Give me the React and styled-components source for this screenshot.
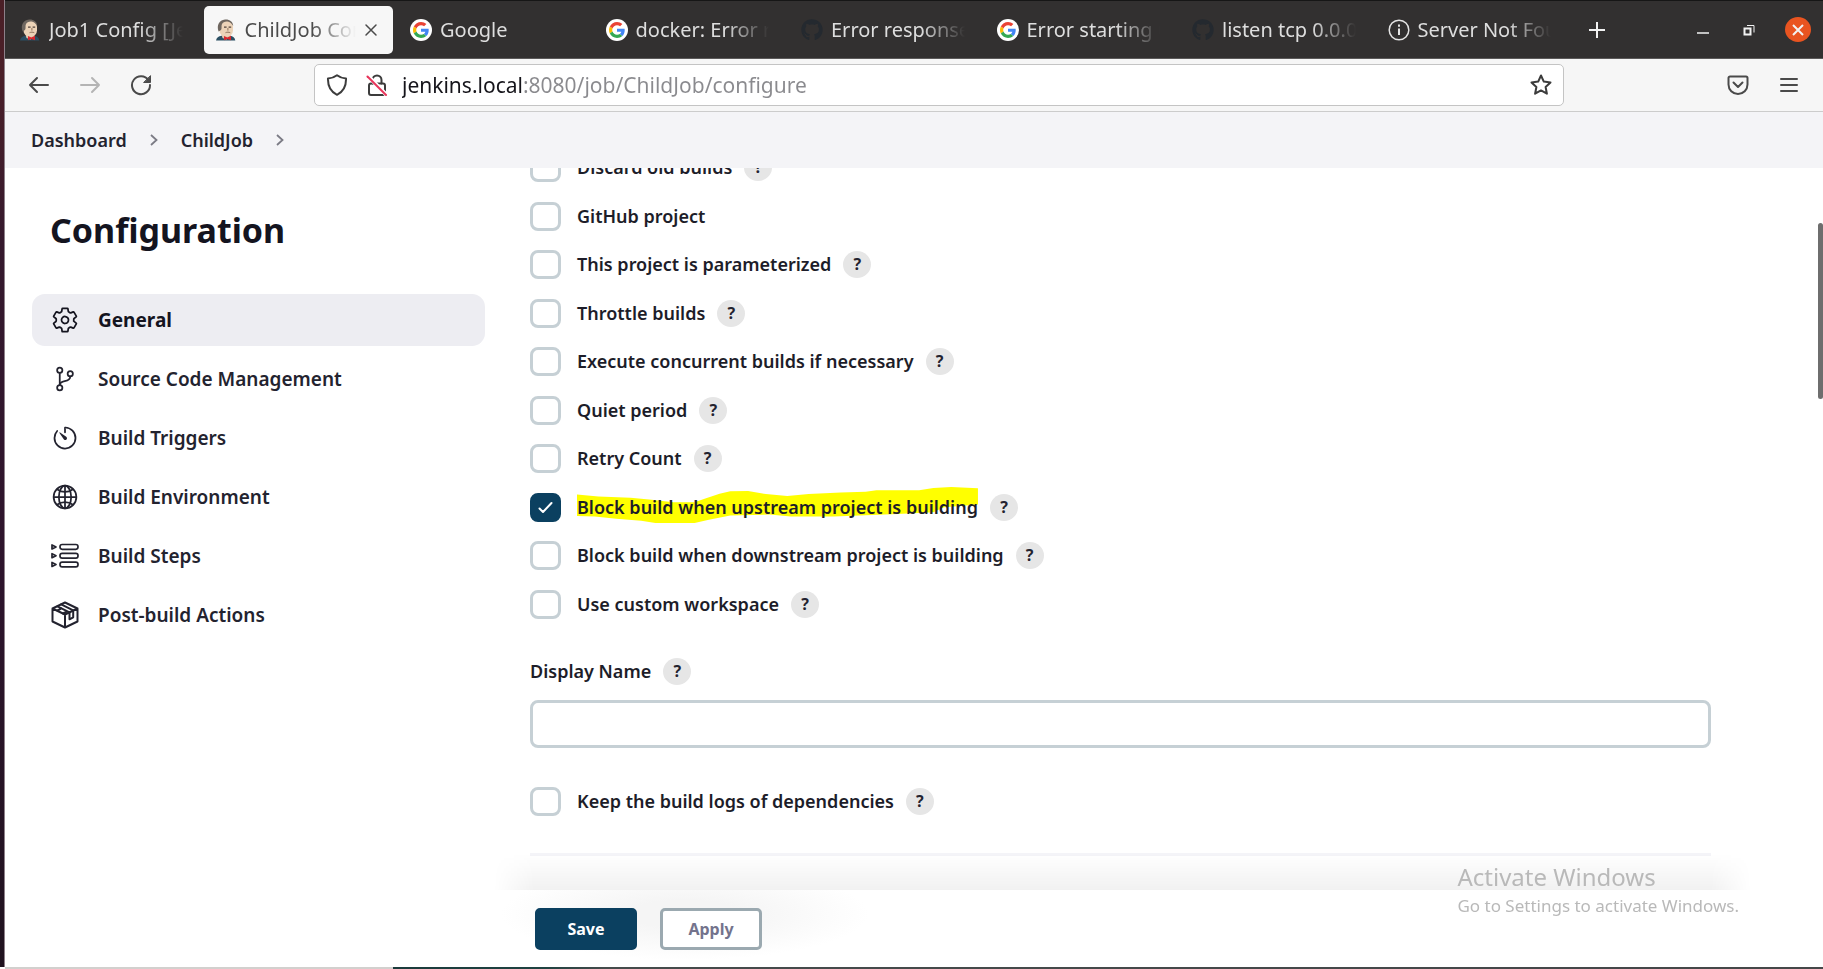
import React from "react";
import styled, { createGlobalStyle, css } from "styled-components";
import {
  IoSettingsOutline,
  IoGitBranchOutline,
  IoTimerOutline,
  IoGlobeOutline,
} from "react-icons/io5";
import { FaGithub } from "react-icons/fa";

const GlobalStyle = createGlobalStyle`
  * { box-sizing: border-box; }
  body {
    margin: 0;
    background: #ffffff;
    color: #14141f;
    font-family: "Noto Sans", "Open Sans", sans-serif;
  }
  button, input { font-family: inherit; }
`;

/* ---------- Shell ---------- */

const Desktop = styled.div`
  display: flex;
  height: 100vh;
  min-height: 640px;
  overflow: hidden;
`;

const DockEdge = styled.div`
  flex: none;
  width: 5px;
  margin-bottom: 2px;
  background: linear-gradient(#4a1f26 0%, #4a1f28 8%, #35192d 25%, #2d142c 60%, #20131f 100%);
  border-right: 1px solid #8d8089;
`;

const BrowserWindow = styled.div`
  flex: 1;
  min-width: 0;
  display: flex;
  flex-direction: column;
`;

/* ---------- Title bar ---------- */

const TitleBar = styled.header`
  flex: none;
  display: flex;
  height: 59px;
  background: #323030;
  border-top: 1px solid #161616;
  border-bottom: 1px solid #5c5a5a;
`;

const TabStrip = styled.div`
  flex: 1;
  min-width: 0;
  display: flex;
`;

const Tab = styled.div`
  flex: 1;
  min-width: 0;
  display: flex;
  align-items: center;
  gap: 8px;
  height: 48px;
  margin: 5px 3px 0;
  padding: 0 15px 0 11px;
  border-radius: 5px;
  color: #dedede;
  font-size: 20px;
  line-height: 30px;
  white-space: nowrap;
  ${(p) =>
    p.$active &&
    css`
      background: #f7f7f7;
      color: #4b4b4b;
    `}
`;

const TabIcon = styled.span`
  flex: none;
  display: flex;
  width: 22px;
  height: 22px;
  svg { width: 22px; height: 22px; }
`;

const TabTitle = styled.span`
  flex: 1;
  min-width: 0;
  overflow: hidden;
  mask-image: linear-gradient(to left, transparent 0, black 44px);
`;

const TabClose = styled.button`
  flex: none;
  display: flex;
  padding: 0;
  border: 0;
  background: none;
  color: #4b4b4b;
  svg { width: 14px; height: 14px; }
`;

const WindowControls = styled.div`
  flex: none;
  display: flex;
  align-items: center;
  justify-content: space-between;
  width: 254px;
  padding: 0 12px 0 18px;
`;

const ControlGroup = styled.div`
  display: flex;
  align-items: center;
  gap: 26px;
`;

const ControlButton = styled.button`
  display: flex;
  align-items: center;
  justify-content: center;
  width: 20px;
  height: 28px;
  padding: 0;
  border: 0;
  background: none;
  color: #f2f2f2;
  ${(p) =>
    p.$close &&
    css`
      width: 26px;
      height: 25px;
      border-radius: 50%;
      background: #e95420;
    `}
`;

/* ---------- Toolbar ---------- */

const Toolbar = styled.div`
  flex: none;
  display: flex;
  align-items: center;
  height: 53px;
  padding: 0 23px;
  background: #f6f6f6;
  border-bottom: 1px solid #cccccc;
`;

const ToolGroup = styled.div`
  flex: none;
  display: flex;
  align-items: center;
  gap: 29px;
`;

const ToolButton = styled.button`
  display: flex;
  padding: 0;
  border: 0;
  background: none;
  color: ${(p) => (p.$dim ? "#b4b4b4" : "#4a4a4a")};
  svg { width: 22px; height: 22px; }
`;

const AddressBar = styled.div`
  flex: 1;
  min-width: 0;
  display: flex;
  align-items: center;
  gap: 18px;
  height: 42px;
  margin: 0 163px 0 162px;
  padding: 0 11px;
  background: #ffffff;
  border: 1px solid #c4c4c4;
  border-radius: 5px;
  color: #3c3c3c;
  svg { flex: none; width: 22px; height: 22px; }
`;

const AddressInput = styled.input`
  flex: 1;
  min-width: 0;
  height: 36px;
  margin-left: -4px;
  padding: 0;
  border: 0;
  outline: 0;
  font-size: 21px;
  color: transparent;
  background: linear-gradient(to right, #15141a 122px, #8a8a8e 122px);
  background-clip: text;
`;

/* ---------- Breadcrumbs ---------- */

const Breadcrumbs = styled.nav`
  flex: none;
  display: flex;
  align-items: center;
  gap: 22px;
  height: 56px;
  padding-left: 26px;
  background: #f4f4f7;
  color: #7b7b85;
  svg { width: 10px; height: 12px; }
`;

const Crumb = styled.a`
  color: #23232f;
  font-size: 18px;
  font-weight: 600;
  line-height: 24px;
  text-decoration: none;
`;

/* ---------- Page ---------- */

const Page = styled.main`
  position: relative;
  flex: 1;
  min-height: 0;
  overflow: hidden;
  display: grid;
  grid-template-columns: 453px 1fr;
  column-gap: 45px;
  padding: 0 112px 0 27px;
`;

const SideNav = styled.aside`
  padding-top: 42px;
`;

const Heading = styled.h1`
  margin: 0 0 44px 18px;
  font-size: 34px;
  font-weight: 700;
  line-height: 40px;
`;

const NavList = styled.nav`
  display: flex;
  flex-direction: column;
  gap: 7px;
`;

const NavItem = styled.a`
  display: flex;
  align-items: center;
  gap: 19px;
  height: 52px;
  padding: 0 19px;
  border-radius: 13px;
  background: ${(p) => (p.$active ? "#ededf2" : "transparent")};
  color: ${(p) => (p.$active ? "#14141f" : "#23232f")};
  font-size: 19px;
  font-weight: ${(p) => (p.$active ? 700 : 600)};
  line-height: 28px;
  text-decoration: none;
  svg { width: 28px; height: 28px; }
`;

const SettingsForm = styled.form`
  min-width: 0;
`;

const OptionList = styled.div`
  display: flex;
  flex-direction: column;
  justify-content: space-between;
  height: 466px;
  margin-top: -15px;
`;

const OptionRow = styled.div`
  display: flex;
  align-items: center;
  height: 29px;
  margin-top: ${(p) => (p.$spaced ? "39px" : "0")};
`;

const CheckWrap = styled.span`
  position: relative;
  flex: none;
  display: flex;
  margin-right: 16px;
  svg {
    position: absolute;
    inset: 8px;
    width: 15px;
    height: 13px;
    pointer-events: none;
  }
`;

const Checkbox = styled.input`
  appearance: none;
  width: 31px;
  height: 29px;
  margin: 0;
  border: 3px solid #c6d0d5;
  border-radius: 8px;
  background: #ffffff;
  &:checked {
    border-color: #0b4060;
    background: #0b4060;
  }
`;

const OptionLabel = styled.label`
  position: relative;
  z-index: 0;
  margin-right: 12px;
  color: #1d1d29;
  font-size: 18px;
  font-weight: 600;
  line-height: 29px;
  white-space: nowrap;
`;

const MarkerStroke = styled.svg`
  position: absolute;
  z-index: -1;
  left: 0;
  top: -6px;
  width: 100%;
  height: 36px;
`;

const HelpButton = styled.button`
  flex: none;
  width: 28px;
  height: 27px;
  padding: 0;
  border: 0;
  border-radius: 50%;
  background: #e6e6e6;
  color: #23232f;
  font-size: 16px;
  font-weight: 700;
  line-height: 27px;
`;

const FieldHeader = styled.div`
  display: flex;
  align-items: center;
  height: 28px;
  margin: 38px 0 15px;
`;

const TextField = styled.input`
  display: block;
  width: 100%;
  height: 48px;
  padding: 0 12px;
  border: 3px solid #c6d0d5;
  border-radius: 8px;
  background: #ffffff;
  font-size: 18px;
`;

const SectionDivider = styled.hr`
  height: 3px;
  margin: 37px 0 0;
  border: 0;
  background: #f4f4f8;
`;

const FooterShade = styled.div`
  position: absolute;
  left: 485px;
  right: 68px;
  bottom: 0;
  height: 36px;
  background: linear-gradient(rgba(0, 0, 0, 0), rgba(0, 0, 0, 0.055));
  mask-image: linear-gradient(to right, transparent 4px, black 44px, black calc(100% - 44px), transparent calc(100% - 4px));
`;

const ScrollThumb = styled.div`
  position: absolute;
  top: 55px;
  right: 0;
  width: 5px;
  height: 176px;
  border-radius: 3px;
  background: #6e6e6e;
`;

const ActionBar = styled.footer`
  flex: none;
  display: flex;
  align-items: flex-start;
  gap: 23px;
  height: 77px;
  padding: 18px 0 0 530px;
  background: radial-gradient(ellipse 184px 46px at 680px 24px, #f5f5f5 30%, #ffffff 100%);
`;

const ActionButton = styled.button`
  width: 102px;
  height: 42px;
  padding: 0;
  border: 3px solid ${(p) => (p.$primary ? "#0b4060" : "#9ba9b0")};
  border-radius: 5px;
  background: ${(p) => (p.$primary ? "#0b4060" : "#ffffff")};
  color: ${(p) => (p.$primary ? "#ffffff" : "#73738c")};
  font-size: 16px;
  font-weight: 700;
`;

const Taskbar = styled.div`
  flex: none;
  height: 2px;
  background: linear-gradient(to right, #d2d0ce 388px, #1b3b3c 388px, #1f4241 540px, #454b4b 600px, #454749 100%);
`;

const Watermark = styled.aside`
  position: fixed;
  right: 84px;
  bottom: 50px;
  color: #b9b9b9;
  font-size: 17px;
  line-height: 26px;
  pointer-events: none;
`;

const WatermarkTitle = styled.div`
  font-size: 24px;
  line-height: 32px;
`;

/* ---------- Drawings ---------- */

const JenkinsHead = () => (
  <svg viewBox="0 0 22 22" aria-hidden="true">
    <path d="M1 21.500c.6-3 2.400-4.300 5.500-4.800h8.500c3.200.5 4.700 1.800 5.300 4.800z" fill="#2b4f63" />
    <path d="M6 13.500l1.500 5.500 4 1.500 4-3v-4z" fill="#e3c9ae" />
    <rect x="4.500" y="1.400" width="13.500" height="16" rx="6" fill="#ecd3b8" />
    <path d="M3.600 12.500C1.400 6.500 4 1.200 10 .6c4.500-.3 8 2 8.200 6.400C17 5 15 3 12.500 2.600 9.500 2.400 8 3.400 7 5c-1 2 .2 4.500-1 6z" fill="#6e665f" />
    <path d="M9 8.200h2.600M13.600 8.200h2.600" stroke="#51433a" strokeWidth="1.200" />
    <path d="M12.900 9v2.600M10.500 13.700c1.500-.7 3.300-.7 4.800 0" stroke="#8c705a" strokeWidth="1" fill="none" />
    <path d="M9 17l3.300 1.500L16 16.800v4.400l-3.700-1.300L9 21.200z" fill="#d8292f" />
  </svg>
);

const GoogleLogo = () => (
  <svg viewBox="0 0 48 48" aria-hidden="true">
    <circle cx="24" cy="24" r="24" fill="#ffffff" />
    <g transform="translate(6.500 6.500) scale(.73)">
      <path fill="#EA4335" d="M24 9.500c3.540 0 6.710 1.220 9.210 3.600l6.850-6.850C35.900 2.380 30.470 0 24 0 14.620 0 6.510 5.380 2.560 13.220l7.980 6.190C12.430 13.720 17.740 9.500 24 9.500z" />
      <path fill="#4285F4" d="M46.980 24.550c0-1.570-.15-3.090-.38-4.550H24v9.020h12.940c-.58 2.960-2.260 5.480-4.780 7.180l7.730 6c4.510-4.180 7.090-10.360 7.090-17.650z" />
      <path fill="#FBBC05" d="M10.530 28.590c-.48-1.450-.76-2.990-.76-4.590s.27-3.140.76-4.590l-7.980-6.190C.92 16.460 0 20.120 0 24c0 3.880.92 7.540 2.560 10.780l7.970-6.190z" />
      <path fill="#34A853" d="M24 48c6.480 0 11.930-2.130 15.890-5.810l-7.730-6c-2.150 1.450-4.920 2.300-8.160 2.300-6.260 0-11.570-4.220-13.470-9.910l-7.980 6.190C6.510 42.620 14.620 48 24 48z" />
    </g>
  </svg>
);

const GithubLogo = () => <FaGithub color="#24292f" />;

const InfoIcon = () => (
  <svg viewBox="0 0 22 22" fill="none" stroke="#e4e4e4" strokeWidth="1.500" aria-hidden="true">
    <circle cx="11" cy="11" r="9.800" />
    <path d="M11 9.500V16M11 5.500v2.200" strokeWidth="2" />
  </svg>
);

const Stroke = ({ children, box = 22, width = 2 }) => (
  <svg
    viewBox={`0 0 ${box} ${box}`}
    fill="none"
    stroke="currentColor"
    strokeWidth={width}
    strokeLinecap="round"
    strokeLinejoin="round"
    aria-hidden="true"
  >
    {children}
  </svg>
);

const CloseIcon = () => (
  <Stroke box={14} width={1.5}><path d="M2 2l10 10M12 2L2 12" /></Stroke>
);
const BackIcon = () => (
  <Stroke><path d="M20 11H2M9 4l-7 7 7 7" /></Stroke>
);
const ForwardIcon = () => (
  <Stroke><path d="M2 11h18M13 4l7 7-7 7" /></Stroke>
);
const ReloadIcon = () => (
  <Stroke>
    <path d="M18.500 6.200A9 9 0 1 0 20 11" />
    <path d="M20.500 2v6.500H14z" fill="currentColor" strokeWidth="1" />
  </Stroke>
);
const ShieldIcon = () => (
  <Stroke><path d="M11 1.200c2.500 2 5.500 3 9 3.200.3 7.500-2 13-9 16.400C4 17.400 1.700 11.900 2 4.400c3.500-.2 6.500-1.200 9-3.200z" /></Stroke>
);
const LockIcon = () => (
  <Stroke>
    <path d="M6.500 9.500V6a4.500 4.500 0 0 1 9 0v3.500" />
    <rect x="3" y="9.500" width="16" height="11.500" rx="2" />
    <path d="M2.500 2.500l18 18.500" stroke="#ffffff" strokeWidth="4" />
    <path d="M1.500 2.500l18.500 18.500" stroke="#e8355b" />
  </Stroke>
);
const StarIcon = () => (
  <Stroke><path d="M11 1.500l2.800 6.100 6.700.8-4.900 4.600 1.300 6.700-5.900-3.300-5.900 3.300 1.300-6.700L1.500 8.400l6.700-.8z" /></Stroke>
);
const PocketIcon = () => (
  <Stroke>
    <path d="M3 2.500h16a1.500 1.500 0 0 1 1.500 1.500v6.500a9.500 9.500 0 0 1-19 0V4A1.500 1.500 0 0 1 3 2.500z" />
    <path d="M6.500 8.500l4.500 4.500 4.500-4.500" />
  </Stroke>
);
const MenuIcon = () => (
  <Stroke><path d="M3 5h16M3 11h16M3 17h16" /></Stroke>
);
const Chevron = () => (
  <svg viewBox="0 0 10 12" fill="none" stroke="currentColor" strokeWidth="1.800" aria-hidden="true">
    <path d="M2 1l5.500 5L2 11" />
  </svg>
);
const StepsIcon = () => (
  <Stroke box={28} width={1.7}>
    {[2.5, 11.3, 20.1].map((y) => (
      <React.Fragment key={y}>
        <rect x="9" y={y} width="18" height="4.800" rx="2.200" />
        <path d={`M1 ${y + 0.4}v4l4-2z`} />
      </React.Fragment>
    ))}
  </Stroke>
);
const PackageIcon = () => (
  <Stroke box={28} width={2}>
    <path d="M14 1.500L26.500 7.500v13L14 26.500 1.500 20.500v-13zM1.500 7.500l12.500 6 12.500-6M14 13.500v13" />
    <path d="M6.500 5.300l12 6M10.200 3.400l12 6M18.500 11.300v7l3.700-2V9.400M6.500 9.500l4-2.200M12 12.500l4-2" />
  </Stroke>
);

/* ---------- Data ---------- */

const tabs = [
  { title: "Job1 Config [Jenkins]", Icon: JenkinsHead },
  { title: "ChildJob Config", Icon: JenkinsHead, active: true },
  { title: "Google", Icon: GoogleLogo },
  { title: "docker: Error response", Icon: GoogleLogo },
  { title: "Error response", Icon: GithubLogo },
  { title: "Error starting userland", Icon: GoogleLogo },
  { title: "listen tcp 0.0.0.0", Icon: GithubLogo },
  { title: "Server Not Found", Icon: InfoIcon },
];

const navItems = [
  { label: "General", Icon: IoSettingsOutline, active: true },
  { label: "Source Code Management", Icon: IoGitBranchOutline },
  { label: "Build Triggers", Icon: IoTimerOutline },
  { label: "Build Environment", Icon: IoGlobeOutline },
  { label: "Build Steps", Icon: StepsIcon },
  { label: "Post-build Actions", Icon: PackageIcon },
];

const options = [
  { id: "discard", label: "Discard old builds", help: true },
  { id: "github", label: "GitHub project" },
  { id: "params", label: "This project is parameterized", help: true },
  { id: "throttle", label: "Throttle builds", help: true },
  { id: "concurrent", label: "Execute concurrent builds if necessary", help: true },
  { id: "quiet", label: "Quiet period", help: true },
  { id: "retry", label: "Retry Count", help: true },
  { id: "upstream", label: "Block build when upstream project is building", help: true, checked: true, marked: true },
  { id: "downstream", label: "Block build when downstream project is building", help: true },
  { id: "workspace", label: "Use custom workspace", help: true },
];

const Help = ({ label }) => (
  <HelpButton type="button" aria-label={`Help for feature: ${label}`}>?</HelpButton>
);

const Option = ({ id, label, help, checked, marked, spaced }) => (
  <OptionRow $spaced={spaced}>
    <CheckWrap>
      <Checkbox type="checkbox" id={id} defaultChecked={checked} />
      {checked && (
        <svg viewBox="0 0 15 13" fill="none" stroke="#ffffff" strokeWidth="2" strokeLinecap="round" strokeLinejoin="round" aria-hidden="true">
          <path d="M1.500 7.500L5 11l8.500-9" />
        </svg>
      )}
    </CheckWrap>
    <OptionLabel htmlFor={id}>
      {marked && (
        <MarkerStroke viewBox="0 0 1125 107" preserveAspectRatio="none" aria-hidden="true">
          <path
            fill="#ffff00"
            d="M0 22L60 28 150 32 210 38 270 45H330L360 34 400 20 430 13 480 12 530 21 590 27 650 21 740 16 810 14 840 10H960L1000 3 1050 0 1125 4V52L1030 60 1000 75 900 80 720 88H600L540 82 430 85 370 97 330 107H220L180 100 110 94 50 88 0 86z"
          />
        </MarkerStroke>
      )}
      {label}
    </OptionLabel>
    {help && <Help label={label} />}
  </OptionRow>
);

export default function App() {
  return (
    <>
      <GlobalStyle />
      <Desktop>
        <DockEdge />
        <BrowserWindow>
          <TitleBar>
            <TabStrip>
              {tabs.map(({ title, Icon, active }) => (
                <Tab key={title} $active={active}>
                  <TabIcon><Icon /></TabIcon>
                  <TabTitle>{title}</TabTitle>
                  {active && <TabClose aria-label="Close tab"><CloseIcon /></TabClose>}
                </Tab>
              ))}
            </TabStrip>
            <WindowControls>
              <ControlButton aria-label="New tab">
                <svg width="18" height="18" viewBox="0 0 18 18" stroke="currentColor" strokeWidth="2"><path d="M9 1v16M1 9h16" /></svg>
              </ControlButton>
              <ControlGroup>
                <ControlButton aria-label="Minimize">
                  <svg width="12" height="12" viewBox="0 0 12 12" stroke="currentColor" strokeWidth="1.500"><path d="M0 9h12" /></svg>
                </ControlButton>
                <ControlButton aria-label="Restore">
                  <svg width="12" height="12" viewBox="0 0 12 12" fill="none" stroke="currentColor"><path d="M1.500 4.500h6v6h-6z" strokeWidth="2" /><path d="M4 1.500h7v7" strokeWidth="1" /></svg>
                </ControlButton>
                <ControlButton $close aria-label="Close window">
                  <svg width="12" height="12" viewBox="0 0 12 12" stroke="currentColor" strokeWidth="2"><path d="M1 1l10 10M11 1L1 11" /></svg>
                </ControlButton>
              </ControlGroup>
            </WindowControls>
          </TitleBar>

          <Toolbar>
            <ToolGroup>
              <ToolButton aria-label="Back"><BackIcon /></ToolButton>
              <ToolButton $dim aria-label="Forward"><ForwardIcon /></ToolButton>
              <ToolButton aria-label="Reload"><ReloadIcon /></ToolButton>
            </ToolGroup>
            <AddressBar>
              <ShieldIcon />
              <LockIcon />
              <AddressInput aria-label="Address" defaultValue="jenkins.local:8080/job/ChildJob/configure" />
              <StarIcon />
            </AddressBar>
            <ToolGroup>
              <ToolButton aria-label="Save to Pocket"><PocketIcon /></ToolButton>
              <ToolButton aria-label="Open menu"><MenuIcon /></ToolButton>
            </ToolGroup>
          </Toolbar>

          <Breadcrumbs aria-label="Breadcrumb">
            <Crumb href="#dashboard">Dashboard</Crumb>
            <Chevron />
            <Crumb href="#childjob">ChildJob</Crumb>
            <Chevron />
          </Breadcrumbs>

          <Page>
            <SideNav>
              <Heading>Configuration</Heading>
              <NavList aria-label="Configuration sections">
                {navItems.map(({ label, Icon, active }) => (
                  <NavItem key={label} href="#section" $active={active}>
                    <Icon />
                    {label}
                  </NavItem>
                ))}
              </NavList>
            </SideNav>
            <SettingsForm id="settings">
              <OptionList>
                {options.map((o) => <Option key={o.id} {...o} />)}
              </OptionList>
              <FieldHeader>
                <OptionLabel htmlFor="display-name">Display Name</OptionLabel>
                <Help label="Display Name" />
              </FieldHeader>
              <TextField id="display-name" type="text" />
              <Option id="keep-logs" label="Keep the build logs of dependencies" help spaced />
              <SectionDivider />
            </SettingsForm>
            <FooterShade />
            <ScrollThumb />
          </Page>

          <ActionBar>
            <ActionButton $primary type="submit" form="settings">Save</ActionButton>
            <ActionButton type="button">Apply</ActionButton>
          </ActionBar>
          <Taskbar />
        </BrowserWindow>
      </Desktop>
      <Watermark>
        <WatermarkTitle>Activate Windows</WatermarkTitle>
        Go to Settings to activate Windows.
      </Watermark>
    </>
  );
}
